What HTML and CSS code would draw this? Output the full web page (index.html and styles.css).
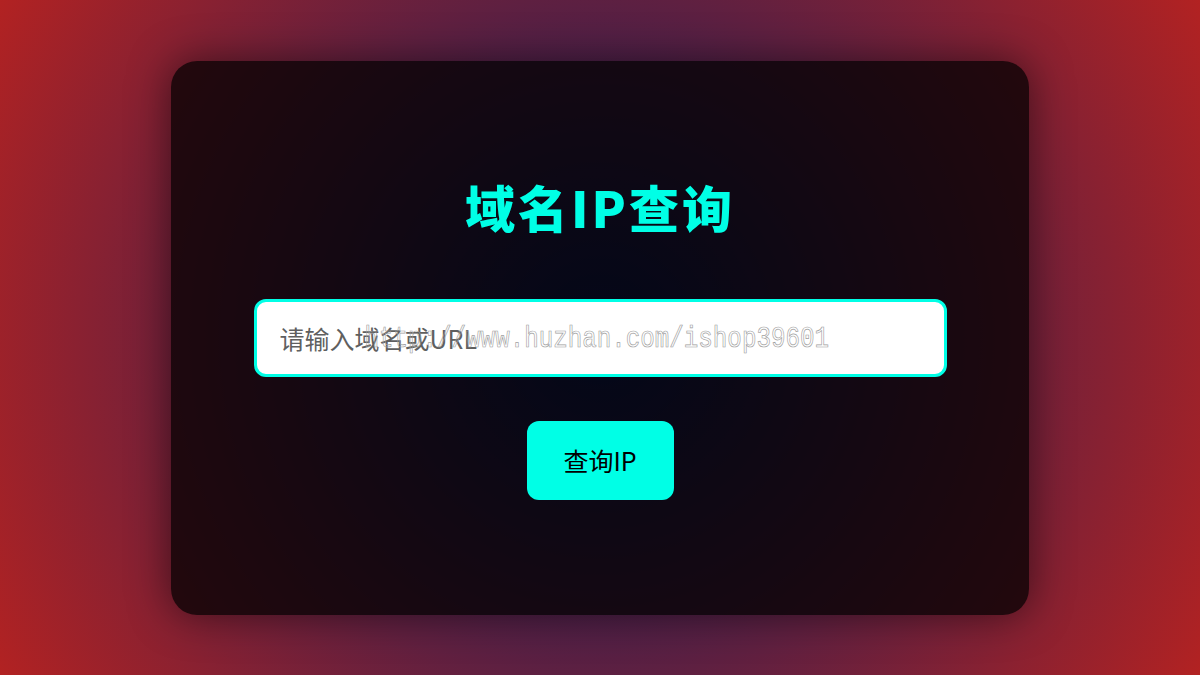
FILE: index.html
```html
<!DOCTYPE html>
<html lang="zh-CN">
<head>
<meta charset="utf-8">
<title>域名IP查询</title>
<link rel="stylesheet" href="styles.css">
</head>
<body>
<div class="card">
  <h1 class="title">域名IP查询</h1>
  <div class="field">
    <input class="input" type="text" placeholder="请输入域名或URL">
    <span class="watermark">http://www.huzhan.com/ishop39601</span>
  </div>
  <button class="btn" type="button">查询IP</button>
</div>
</body>
</html>
```
FILE: styles.css
```css
html, body {
  margin: 0;
  padding: 0;
  height: 100%;
}
body {
  font-family: "Noto Sans CJK SC", "Noto Sans", sans-serif;
  background: radial-gradient(circle farthest-corner at 50% 50%, #0b1e60 0%, #b22222 100%);
  display: flex;
  justify-content: center;
  align-items: center;
  overflow: hidden;
}
.card {
  box-sizing: border-box;
  width: 858px;
  height: 554px;
  margin-top: 0;
  background: rgba(0, 0, 0, 0.74);
  border-radius: 26px;
  box-shadow: 0 0 40px rgba(0, 0, 0, 0.5);
  display: flex;
  flex-direction: column;
  align-items: center;
  padding-top: 114px;
}
.title {
  margin: 0;
  font-size: 50px;
  line-height: 62px;
  font-weight: 900;
  letter-spacing: 3px;
  color: #00ffe6;
}
.field {
  position: relative;
  margin-top: 62px;
  width: 693px;
  height: 78px;
}
.input {
  box-sizing: border-box;
  width: 100%;
  height: 100%;
  border: 3px solid #00ffe6;
  border-radius: 12px;
  background: #fff;
  padding: 0 23px;
  font-family: "Noto Sans CJK SC", "Noto Sans", sans-serif;
  font-size: 25px;
  color: #333;
  outline: none;
}
.input::placeholder {
  color: #5f5f5f;
}
.watermark {
  position: absolute;
  left: 111px;
  top: 26px;
  font-family: "Liberation Mono", monospace;
  font-size: 24.2px;
  line-height: 30px;
  color: transparent;
  -webkit-text-stroke: 0.6px #a0a0a0;
  transform: scaleY(1.2);
  transform-origin: left center;
  pointer-events: none;
  white-space: nowrap;
}
.btn {
  margin-top: 44px;
  width: 147px;
  height: 79px;
  border: none;
  border-radius: 12px;
  background: #00ffe6;
  color: #000;
  font-family: "Noto Sans CJK SC", "Noto Sans", sans-serif;
  font-size: 25px;
  cursor: pointer;
}
```
